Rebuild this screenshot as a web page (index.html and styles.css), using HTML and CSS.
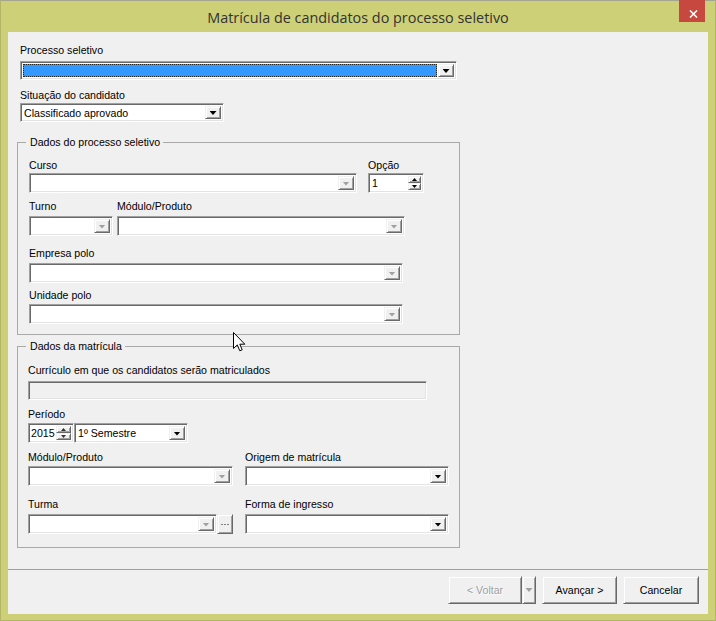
FILE: index.html
```html
<!DOCTYPE html>
<html lang="pt-BR">
<head>
<meta charset="utf-8">
<title>Matrícula de candidatos do processo seletivo</title>
<link rel="stylesheet" href="styles.css">
</head>
<body>
<div class="window">
  <header class="titlebar">
    <h1 class="title">Matrícula de candidatos do processo seletivo</h1>
    <button class="close" aria-label="Fechar"><svg width="9" height="8" viewBox="0 0 9 8"><path d="M1 0.5 L8 7.5 M8 0.5 L1 7.5" stroke="#fff" stroke-width="1.6" fill="none"/></svg></button>
  </header>
  <div class="client">
    <main class="content">
      <div class="top">
        <label class="lbl gap4">Processo seletivo</label>
        <div class="combo h19 w-processo focus"><span class="value"><span class="selection"></span></span><span class="drop"><i class="tri"></i></span></div>
        <label class="lbl gap1 mt9">Situação do candidato</label>
        <div class="combo h19 w-situacao"><span class="value">Classificado aprovado</span><span class="drop"><i class="tri"></i></span></div>
      </div>

      <fieldset class="group g1">
        <legend>Dados do processo seletivo</legend>
        <div class="row gap11">
          <div class="col">
            <label class="lbl gap1">Curso</label>
            <div class="combo disabled w-curso"><span class="value"></span><span class="drop"><i class="tri"></i></span></div>
          </div>
          <div class="col">
            <label class="lbl gap1">Opção</label>
            <div class="combo spin w-opcao"><span class="value">1</span><span class="spinbtns"><span class="sb"><i class="tri-s up"></i></span><span class="sb"><i class="tri-s"></i></span></span></div>
          </div>
        </div>
        <div class="row gap4 mt7">
          <div class="col">
            <label class="lbl gap3">Turno</label>
            <div class="combo disabled w-turno"><span class="value"></span><span class="drop"><i class="tri"></i></span></div>
          </div>
          <div class="col">
            <label class="lbl gap3">Módulo/Produto</label>
            <div class="combo disabled w-modulo1"><span class="value"></span><span class="drop"><i class="tri"></i></span></div>
          </div>
        </div>
        <div class="row mt11">
          <div class="col">
            <label class="lbl gap3">Empresa polo</label>
            <div class="combo disabled w-polo"><span class="value"></span><span class="drop"><i class="tri"></i></span></div>
          </div>
        </div>
        <div class="row mt6">
          <div class="col">
            <label class="lbl gap2">Unidade polo</label>
            <div class="combo disabled w-polo"><span class="value"></span><span class="drop"><i class="tri"></i></span></div>
          </div>
        </div>
      </fieldset>

      <fieldset class="group g2">
        <legend>Dados da matrícula</legend>
        <div class="row">
          <div class="col">
            <label class="lbl gap4">Currículo em que os candidatos serão matriculados</label>
            <div class="edit h19 w-curriculo"></div>
          </div>
        </div>
        <div class="row mt8">
          <div class="col">
            <label class="lbl gap2">Período</label>
            <div class="row">
              <div class="combo spin year w-ano"><span class="value">2015</span><span class="spinbtns"><span class="sb"><i class="tri-s up"></i></span><span class="sb"><i class="tri-s"></i></span></span></div>
              <div class="combo w-semestre"><span class="value">1º Semestre</span><span class="drop"><i class="tri"></i></span></div>
            </div>
          </div>
        </div>
        <div class="row gap12 mt8">
          <div class="col">
            <label class="lbl gap2">Módulo/Produto</label>
            <div class="combo disabled w-modulo2"><span class="value"></span><span class="drop"><i class="tri"></i></span></div>
          </div>
          <div class="col">
            <label class="lbl gap2">Origem de matrícula</label>
            <div class="combo w-origem"><span class="value"></span><span class="drop"><i class="tri"></i></span></div>
          </div>
        </div>
        <div class="row gap12 mt12">
          <div class="col">
            <label class="lbl gap3">Turma</label>
            <div class="row">
              <div class="combo disabled w-turma"><span class="value"></span><span class="drop"><i class="tri"></i></span></div>
              <span class="ellipsis"><i></i><i></i><i></i></span>
            </div>
          </div>
          <div class="col">
            <label class="lbl gap3">Forma de ingresso</label>
            <div class="combo w-origem"><span class="value"></span><span class="drop"><i class="tri"></i></span></div>
          </div>
        </div>
      </fieldset>
    </main>
    <footer class="footer">
      <div class="split">
        <button class="btn btn-main" disabled>&lt; Voltar</button>
        <button class="btn btn-arrow" disabled><i class="tri"></i></button>
      </div>
      <button class="btn btn-next">Avançar &gt;</button>
      <button class="btn btn-cancel">Cancelar</button>
    </footer>
  </div>
  <svg class="cursor" width="13" height="20" viewBox="0 0 13 20"><path d="M0.5 0.5 V16.5 L4.3 12.9 L6.8 18.8 L9.2 17.8 L6.8 12.2 H11.8 Z" fill="#fff" stroke="#000" stroke-width="1" stroke-linejoin="miter"/></svg>
</div>
</body>
</html>
```

FILE: styles.css
```css
* { box-sizing: border-box; }
html, body { margin: 0; padding: 0; }
body {
  background: #cdd077;
  font-family: "Liberation Sans", Arial, sans-serif;
  font-size: 10.6px;
  color: #000;
}

.window {
  position: relative;
  width: 716px;
  height: 621px;
  display: flex;
  flex-direction: column;
  background: #cdd077;
  border: 1px solid #b3b666;
  border-top-color: #a3a58e;
}

/* title bar */
.titlebar {
  height: 31px;
  flex: none;
  display: grid;
  grid-template-columns: 1fr auto 1fr;
}
.title {
  grid-column: 2;
  margin: 0;
  padding-top: 7px;
  font-family: "Open Sans", "Noto Sans", sans-serif;
  font-weight: 400;
  font-size: 14.4px;
  line-height: 20px;
  color: #333;
  white-space: nowrap;
}
.close {
  grid-column: 3;
  justify-self: end;
  align-self: start;
  width: 26px;
  height: 22px;
  margin: -1px 10px 0 0;
  padding: 5px 0 0 3px;
  border: 0;
  background: #c7483f;
  display: flex;
  align-items: center;
  justify-content: center;
}

/* client */
.client {
  flex: 1;
  margin: 0 7px 6px;
  background: #f0f0f0;
  display: flex;
  flex-direction: column;
}
.content {
  flex: 1;
  padding: 12px 0 0 9px;
}
.top {
  padding-left: 3px;
  display: flex;
  flex-direction: column;
  align-items: flex-start;
}

.lbl {
  display: block;
  height: 13px;
  line-height: 13px;
  white-space: nowrap;
}
.gap1 { margin-bottom: 1px; }
.gap2 { margin-bottom: 2px; }
.gap3 { margin-bottom: 3px; }
.gap4 { margin-bottom: 4px; }
.mt6 { margin-top: 6px; }
.mt7 { margin-top: 7px; }
.mt8 { margin-top: 8px; }
.mt9 { margin-top: 9px; }
.mt11 { margin-top: 11px; }
.mt12 { margin-top: 12px; }

.row { display: flex; align-items: flex-start; }
.row.gap4 { gap: 4px; margin-bottom: 0; }
.row.gap11 { gap: 11px; }
.row.gap12 { gap: 12px; }
.col { display: flex; flex-direction: column; align-items: flex-start; }

/* sunken controls */
.combo, .edit {
  height: 20px;
  border: 1px solid;
  border-color: #a0a0a0 #fff #fff #a0a0a0;
  box-shadow: inset 1px 1px #696969, inset -1px -1px #e3e3e3;
  background: #fff;
}
.combo {
  display: flex;
  padding: 2px;
}
.combo.h19, .edit.h19 { height: 19px; }
.edit { background: #f0f0f0; }
.combo .value {
  flex: 1;
  min-width: 0;
  line-height: 14px;
  padding-left: 1px;
  white-space: nowrap;
  overflow: hidden;
}
.combo.focus .value { padding: 0; margin-right: 1px; }
.selection {
  display: block;
  height: 100%;
  background: #3399ff;
  border: 1px dotted #222;
}

.drop, .sb, .btn, .ellipsis {
  background: #f0f0f0;
  border: 1px solid;
  border-color: #f0f0f0 #696969 #696969 #f0f0f0;
  box-shadow: inset 1px 1px #fff, inset -1px -1px #a0a0a0;
}
.drop {
  flex: none;
  width: 16px;
  display: flex;
  align-items: center;
  justify-content: center;
  padding-top: 1px;
}
.tri {
  display: block;
  width: 7px;
  height: 4px;
  background: #000;
  clip-path: polygon(0 0, 100% 0, 50% 100%);
}
.disabled .tri, .btn[disabled] .tri { background: #a0a0a0; }

.spinbtns {
  flex: none;
  width: 13px;
  display: flex;
  flex-direction: column;
}
.sb {
  flex: 1;
  display: flex;
  align-items: center;
  justify-content: center;
}
.tri-s {
  display: block;
  width: 5px;
  height: 3px;
  background: #000;
  clip-path: polygon(0 0, 100% 0, 50% 100%);
}
.tri-s.up { clip-path: polygon(50% 0, 100% 100%, 0 100%); }
.year .value { padding-left: 0; }
.year .spinbtns { width: 15px; }
.year .tri-s { background: #333; }

.ellipsis {
  width: 16px;
  height: 20px;
  display: flex;
  align-items: center;
  justify-content: center;
  gap: 1px;
  padding-top: 1px;
}
.ellipsis i {
  display: block;
  width: 2px;
  height: 1px;
  background: #808080;
}

/* widths */
.w-processo { width: 437px; }
.w-situacao { width: 204px; }
.w-curso { width: 328px; }
.w-opcao { width: 56px; }
.w-turno { width: 84px; }
.w-modulo1 { width: 288px; }
.w-polo { width: 374px; }
.w-curriculo { width: 399px; }
.w-ano { width: 46px; }
.w-semestre { width: 114px; }
.w-modulo2 { width: 205px; }
.w-origem { width: 204px; }
.w-turma { width: 189px; }

/* group boxes */
.group {
  margin: 0;
  width: 443px;
  border: 1px solid #a9a9a9;
  min-width: 0;
}
.group legend {
  line-height: 13px;
  padding: 0 3px 0 4px;
  white-space: nowrap;
}
.g1 {
  margin-top: 14px;
  padding: 10px 10px 10px 11px;
}
.g1 legend { margin-left: -3px; }
.g2 {
  margin-top: 5px;
  padding: 11px 10px 13px 10px;
}
.g2 legend { margin-left: -2px; }

/* footer */
.footer {
  flex: none;
  height: 45px;
  border-top: 1px solid #a0a0a0;
  display: flex;
  justify-content: flex-end;
  align-items: flex-start;
  gap: 6px;
  padding: 6px 9px 0 0;
}
.split { display: flex; }
.btn {
  height: 28px;
  padding: 0;
  font-family: "Liberation Sans", Arial, sans-serif;
  font-size: 10.6px;
  color: #000;
  display: flex;
  align-items: center;
  justify-content: center;
}
.btn[disabled] {
  color: #a0a0a0;
  text-shadow: 1px 1px #fff;
}
.btn-main { width: 74px; }
.btn-arrow { width: 14px; }
.btn-next { width: 75px; }
.btn-cancel { width: 76px; }

.cursor {
  position: absolute;
  left: 232px;
  top: 331px;
}
```
